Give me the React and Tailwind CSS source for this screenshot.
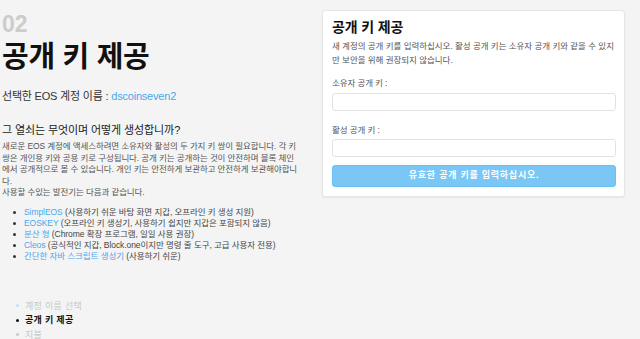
import React from "react";

const F = { fontFamily: '"Liberation Sans", "Noto Sans CJK KR", sans-serif' };

function Dot({ c }) {
  return <span className={`inline-block w-[3px] h-[3px] rounded-full shrink-0 ${c}`} />;
}

export default function App() {
  const items = [
    ["SimplEOS", " (사용하기 쉬운 바탕 화면 지갑, 오프라인 키 생성 지원)"],
    ["EOSKEY", " (오프라인 키 생성기, 사용하기 쉽지만 지갑은 포함되지 않음)"],
    ["분산 형", " (Chrome 확장 프로그램, 일일 사용 권장)"],
    ["Cleos", " (공식적인 지갑, Block.one이지만 명령 줄 도구, 고급 사용자 전용)"],
    ["간단한 자바 스크립트 생성기", " (사용하기 쉬운)"],
  ];
  return (
    <div style={F} className="w-[640px] h-[339px] bg-[#f4f4f4] overflow-hidden flex">
      <div className="w-[300px] ml-[2px] flex flex-col shrink-0">
        <div className="pt-[13px] text-[23px] leading-[23px] font-bold text-[#cccccc]">02</div>
        <div className="mt-[6px] text-[29px] leading-[31px] font-bold text-[#111] tracking-[-0.3px]">공개 키 제공</div>
        <div className="mt-[17px] text-[11px] leading-[13px] text-[#333] tracking-[-0.2px]">
          선택한 EOS 계정 이름 : <span className="text-[#4aa6ee]">dscoinseven2</span>
        </div>
        <div className="mt-[21px] text-[11px] leading-[13px] text-[#222] tracking-[-0.1px]">그 열쇠는 무엇이며 어떻게 생성합니까?</div>
        <p className="mt-[4px] w-[310px] whitespace-nowrap text-[8.5px] leading-[11.5px] text-[#555] tracking-[-0.1px]">
          새로운 EOS 계정에 액세스하려면 소유자와 활성의 두 가지 키 쌍이 필요합니다. 각 키
          <br />
          쌍은 개인용 키와 공용 키로 구성됩니다. 공개 키는 공개하는 것이 안전하며 블록 체인
          <br />
          에서 공개적으로 볼 수 있습니다. 개인 키는 안전하게 보관하고 안전하게 보관해야합니
          <br />
          다.
          <br />
          사용할 수있는 발전기는 다음과 같습니다.
        </p>
        <ul className="mt-[8px] flex flex-col text-[8.5px] leading-[11px] text-[#444] tracking-[-0.07px]">
          {items.map(([a, b], i) => (
            <li key={i} className="flex items-center pl-[11px] whitespace-nowrap">
              <Dot c="bg-[#333]" />
              <span className="ml-[8px]">
                <span className="text-[#4aa6ee]">{a}</span>
                {b}
              </span>
            </li>
          ))}
        </ul>
        <ul className="mt-[37px] flex flex-col text-[9px] leading-[14.5px] tracking-[0.3px]">
          <li className="flex items-center pl-[14px] text-[#c8c8c8]">
            <Dot c="bg-[#bfe0f6]" />
            <span className="ml-[6px]">계정 이름 선택</span>
          </li>
          <li className="flex items-center pl-[14px] text-[#111] font-bold">
            <Dot c="bg-[#111]" />
            <span className="ml-[6px]">공개 키 제공</span>
          </li>
          <li className="flex items-center pl-[14px] text-[#c8c8c8]">
            <Dot c="bg-[#c8c8c8]" />
            <span className="ml-[6px]">지불</span>
          </li>
        </ul>
      </div>
      <div className="ml-[20px] mt-[10px] w-[303px] self-start bg-white border border-[#e6e6e6] rounded-[3px] shadow-[0_1px_2px_rgba(0,0,0,0.06)] pl-[9px] pr-[8px] pt-[8px] pb-[9px] flex flex-col">
        <div className="text-[14px] leading-[16px] font-bold text-[#111] tracking-[-0.15px]">공개 키 제공</div>
        <p className="mt-[5px] whitespace-nowrap text-[8.5px] leading-[13.5px] text-[#555] tracking-[-0.03px]">
          새 계정의 공개 키를 입력하십시오. 활성 공개 키는 소유자 공개 키와 같을 수 있지
          <br />
          만 보안을 위해 권장되지 않습니다.
        </p>
        <div className="mt-[10px] text-[8.5px] leading-[12px] text-[#555] tracking-[-0.1px]">소유자 공개 키 :</div>
        <div className="mt-[4px] h-[18px] border border-[#e2e2e2] rounded-[3px] bg-white" />
        <div className="mt-[13px] text-[8.5px] leading-[12px] text-[#555] tracking-[-0.1px]">활성 공개 키 :</div>
        <div className="mt-[3px] h-[18px] border border-[#e2e2e2] rounded-[3px] bg-white" />
        <div className="mt-[8px] h-[22px] rounded-[3px] bg-[#7ac7f6] border border-[#6cbff3] flex items-center justify-center text-white font-bold text-[9px] tracking-[0.75px]">
          유효한 공개 키를 입력하십시오.
        </div>
      </div>
    </div>
  );
}
